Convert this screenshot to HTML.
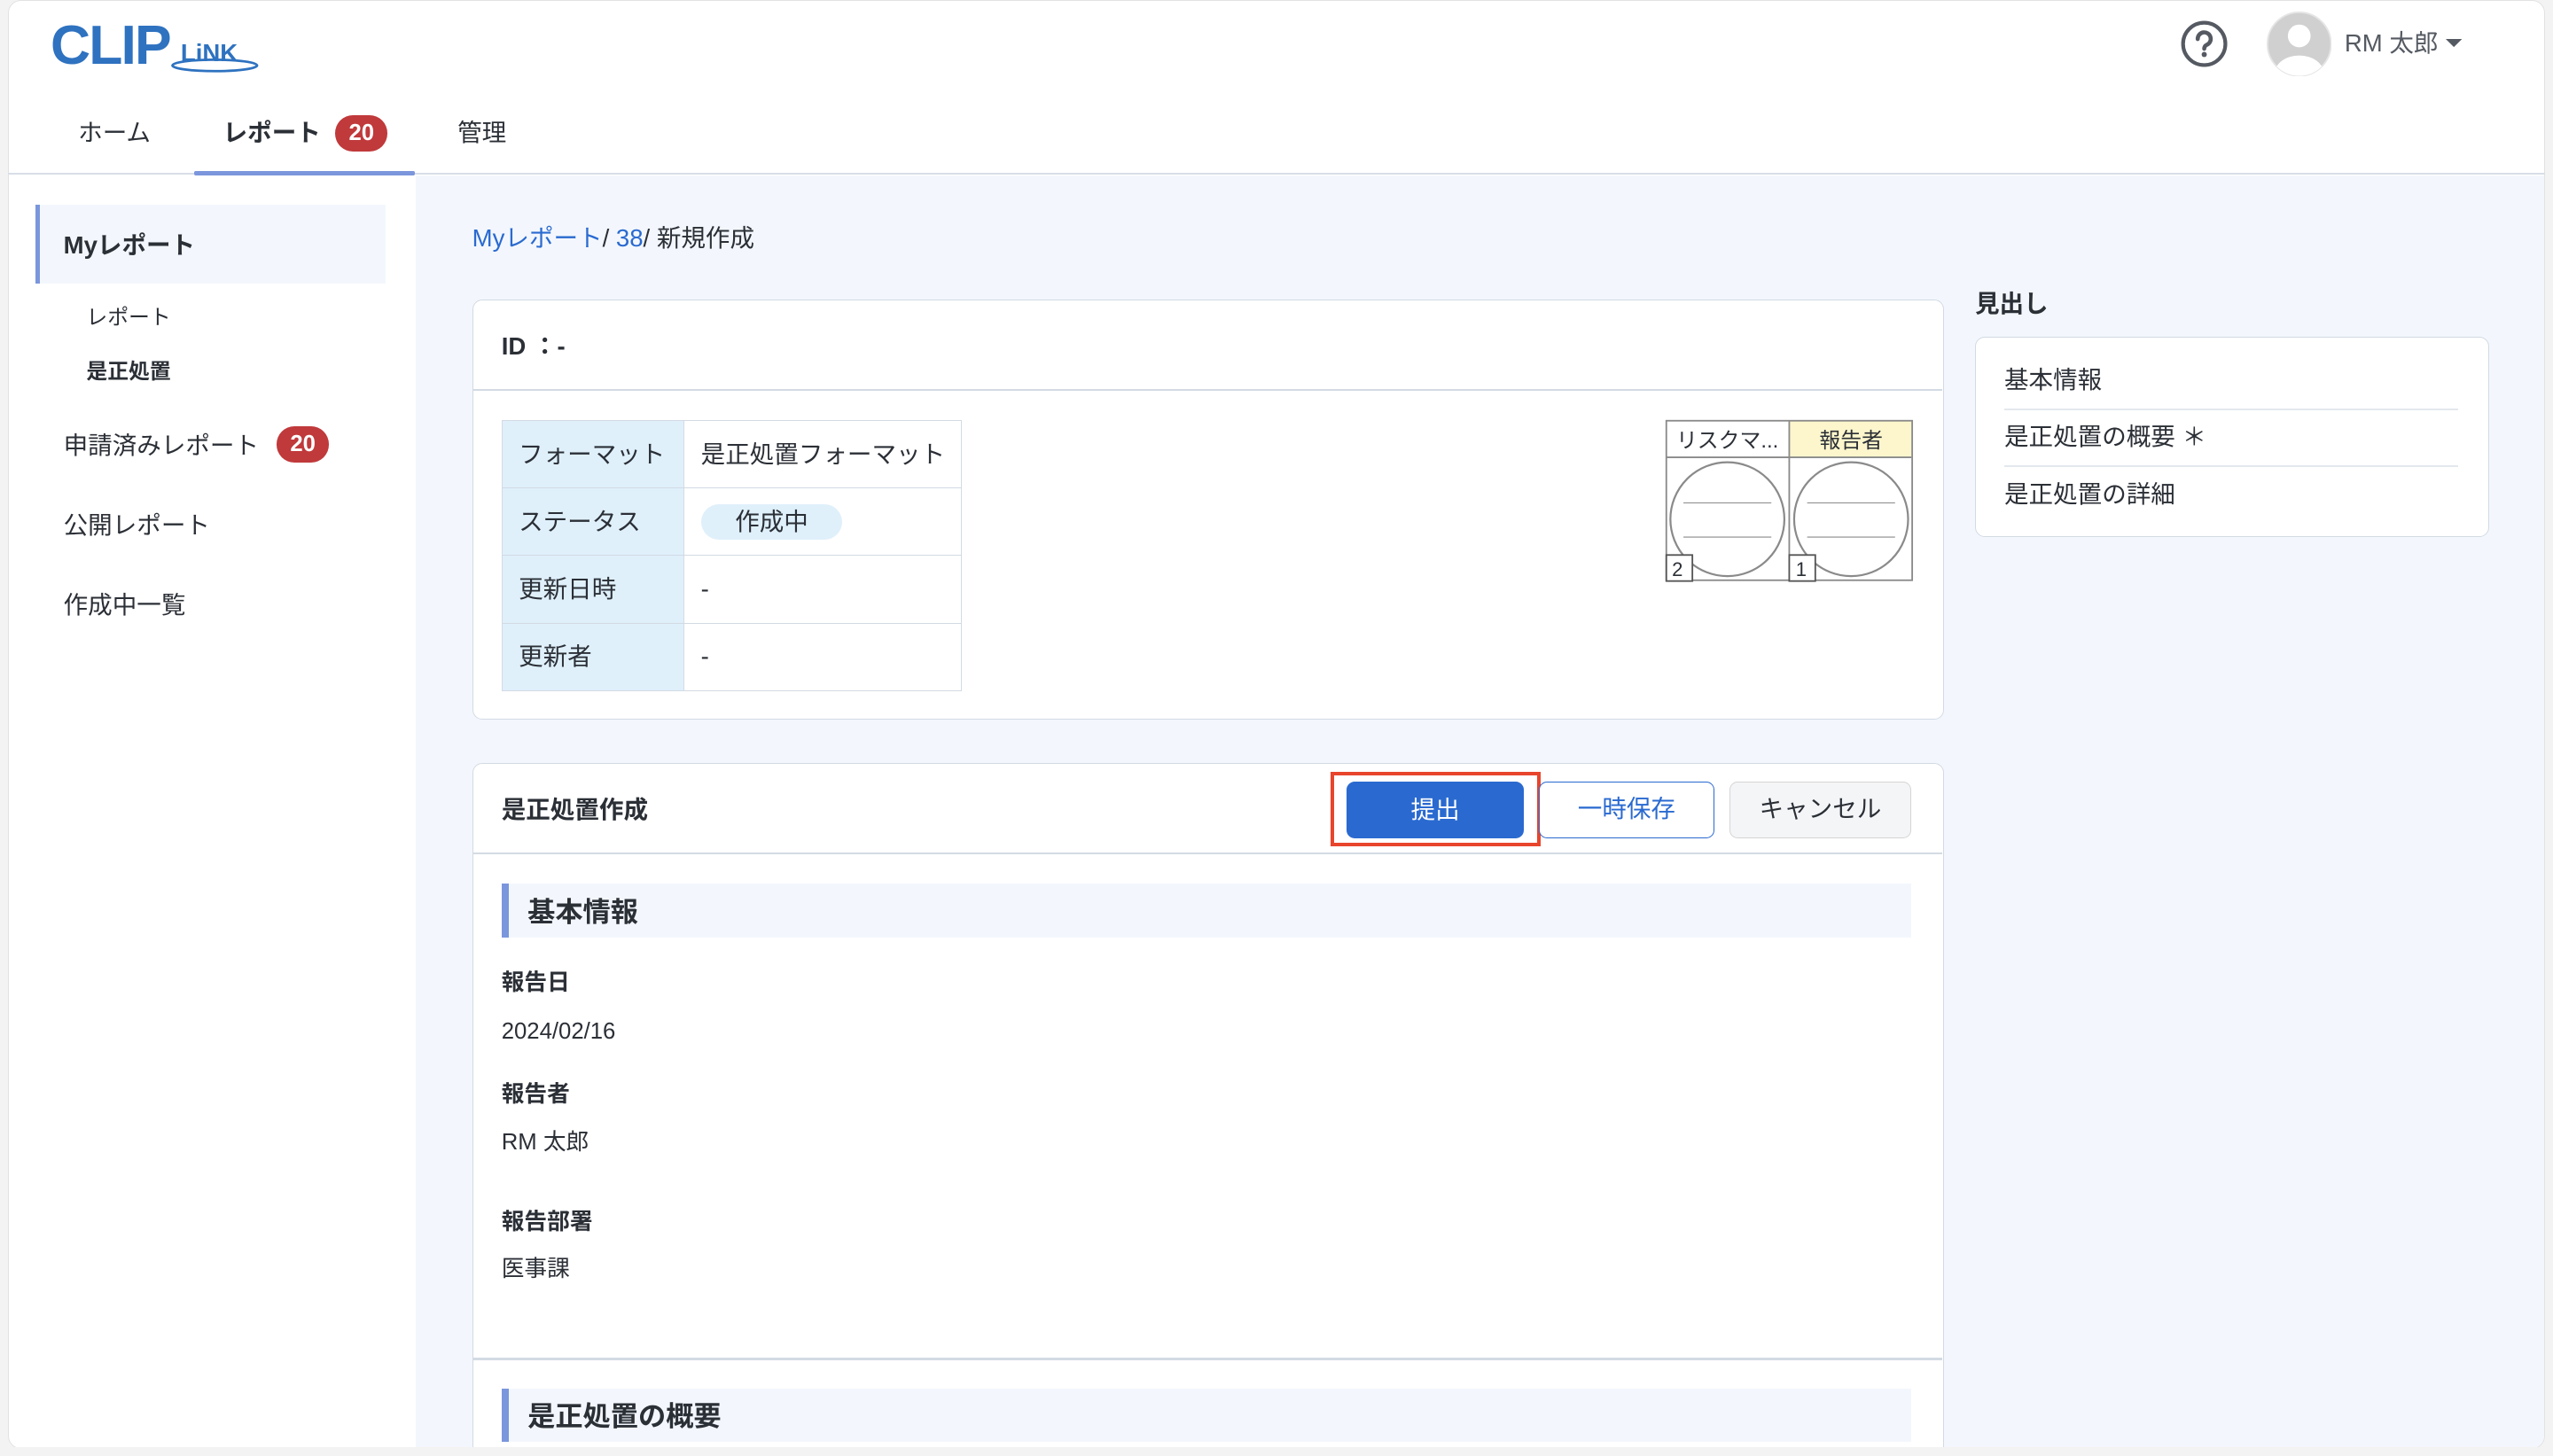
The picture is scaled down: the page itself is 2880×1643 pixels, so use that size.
<!DOCTYPE html>
<html><head><meta charset="utf-8">
<style>
*{box-sizing:border-box;margin:0;padding:0}
html,body{width:2880px;height:1643px;overflow:hidden;background:#f3f3f3}
body{font-family:"Liberation Sans","Noto Sans CJK JP",sans-serif;color:#2b2f36}
#w{zoom:1.83673;width:1568px;height:894.5px;position:relative}
.abs{position:absolute}
#app{left:5px;top:0;width:1558px;height:890px;background:#fff;border-radius:8px;border:1px solid #e2e2e2;overflow:hidden}
#content{left:250px;top:107px;width:1310px;height:790px;background:#f3f7fd}
.t{position:absolute;white-space:nowrap;line-height:1}
.badge{position:absolute;background:#c0393b;color:#fff;font-weight:bold;font-size:14px;border-radius:11px;text-align:center;line-height:22px;height:22px}
.card{position:absolute;background:#fff;border:1px solid #d3dae3;border-radius:6px}
.bl{color:#2a6ad0}
table{border-collapse:collapse;position:absolute}
td{border:1px solid #d3dae3;font-size:15px;height:41.5px;padding:0 10px;white-space:nowrap;line-height:1}
td.l{background:#dff0fb;width:112px}
</style></head><body><div id="w">
<div id="app" class="abs">
 <div id="content" class="abs"></div>
</div>
<!-- logo -->
<div class="t" style="left:31px;top:11px;font-size:34px;font-weight:bold;color:#2e72c0;letter-spacing:-1px">CLIP</div>
<svg class="abs" style="left:103px;top:33px" width="58" height="12"><ellipse cx="29" cy="7" rx="26" ry="3.5" fill="none" stroke="#2e72c0" stroke-width="1.5"/></svg>
<div class="t" style="left:111px;top:25px;font-size:15px;font-weight:bold;color:#2e72c0;background:transparent">LiNK</div>
<!-- nav -->
<div class="t" style="left:48px;top:74px;font-size:15px">ホーム</div>
<div class="t" style="left:137px;top:74px;font-size:15px;font-weight:bold">レポート</div>
<div class="badge" style="left:206px;top:71px;width:32px">20</div>
<div class="t" style="left:281px;top:74px;font-size:15px">管理</div>
<div class="abs" style="left:5px;top:106px;width:1558px;height:1.5px;background:#d8dee6"></div>
<div class="abs" style="left:119px;top:105px;width:136px;height:3px;background:#7b96dc;border-radius:1px"></div>
<!-- header right -->
<svg class="abs" style="left:1339px;top:12px" width="30" height="30"><circle cx="15" cy="15" r="13" fill="none" stroke="#555a62" stroke-width="2.3"/><path d="M11 12a4 4 0 1 1 5.5 3.6c-1 .5-1.5 1.1-1.5 2.4" fill="none" stroke="#555a62" stroke-width="2.5" stroke-linecap="round"/><circle cx="15" cy="21.5" r="1.6" fill="#555a62"/></svg>
<svg class="abs" style="left:1392px;top:7px" width="40" height="40"><defs><clipPath id="c"><circle cx="20" cy="20" r="19.5"/></clipPath></defs><circle cx="20" cy="20" r="19.5" fill="#d0d0d0" stroke="#e5e5e5"/><g clip-path="url(#c)"><circle cx="20" cy="15" r="7" fill="#fff"/><ellipse cx="20" cy="38" rx="15" ry="11" fill="#fff"/></g></svg>
<div class="t" style="left:1440px;top:19px;font-size:15px;color:#555a62">RM 太郎</div>
<svg class="abs" style="left:1502px;top:24px" width="10" height="6"><path d="M0 0h10L5 5z" fill="#555a62"/></svg>
<!-- sidebar -->
<div class="abs" style="left:22px;top:126px;width:215px;height:48px;background:#f3f7fd;border-left:3px solid #7b96dc"></div>
<div class="t" style="left:39px;top:143px;font-size:15px;font-weight:bold">Myレポート</div>
<div class="t" style="left:53px;top:189px;font-size:13px">レポート</div>
<div class="t" style="left:53px;top:222px;font-size:13px;font-weight:bold">是正処置</div>
<div class="t" style="left:39px;top:266px;font-size:15px">申請済みレポート</div>
<div class="badge" style="left:170px;top:262px;width:32px">20</div>
<div class="t" style="left:39px;top:315px;font-size:15px">公開レポート</div>
<div class="t" style="left:39px;top:364px;font-size:15px">作成中一覧</div>
<!-- breadcrumb -->
<div class="t" style="left:290px;top:139px;font-size:15px"><span class="bl">Myレポート</span>/ <span class="bl">38</span>/ 新規作成</div>
<!-- card1 -->
<div class="card" style="left:290px;top:184px;width:904px;height:258px"></div>
<div class="t" style="left:308px;top:205px;font-size:15px;font-weight:bold">ID ：-</div>
<div class="abs" style="left:291px;top:239px;width:902px;height:1px;background:#d3dae3"></div>
<table style="left:308px;top:258px;width:283px">
<tr><td class="l">フォーマット</td><td>是正処置フォーマット</td></tr>
<tr><td class="l">ステータス</td><td><span style="display:inline-block;background:#dff0fb;border-radius:12px;padding:0 21px;line-height:22px">作成中</span></td></tr>
<tr><td class="l">更新日時</td><td>-</td></tr>
<tr><td class="l">更新者</td><td>-</td></tr>
</table>
<svg class="abs" style="left:1022px;top:257px" width="154" height="102" font-family="Liberation Sans,Noto Sans CJK JP,sans-serif">
<rect x="77" y="1.5" width="75" height="23" fill="#fdf6cc"/>
<rect x="1.5" y="1.5" width="151" height="98" fill="none" stroke="#8a8a8a"/>
<line x1="77" y1="1.5" x2="77" y2="100" stroke="#8a8a8a"/>
<line x1="1.5" y1="24" x2="152" y2="24" stroke="#8a8a8a"/>
<text x="39" y="18" font-size="13" text-anchor="middle" fill="#2b2f36">リスクマ...</text>
<text x="115" y="18" font-size="13" text-anchor="middle" fill="#2b2f36">報告者</text>
<circle cx="39" cy="62" r="35" fill="none" stroke="#8a8a8a" stroke-width="1.2"/>
<circle cx="115" cy="62" r="35" fill="none" stroke="#8a8a8a" stroke-width="1.2"/>
<line x1="12" y1="52" x2="66" y2="52" stroke="#8a8a8a" stroke-width=".6"/><line x1="12" y1="73" x2="66" y2="73" stroke="#8a8a8a" stroke-width=".6"/>
<line x1="88" y1="52" x2="142" y2="52" stroke="#8a8a8a" stroke-width=".6"/><line x1="88" y1="73" x2="142" y2="73" stroke="#8a8a8a" stroke-width=".6"/>
<rect x="1.5" y="84" width="16" height="16" fill="#fff" stroke="#555" />
<rect x="77" y="84" width="16" height="16" fill="#fff" stroke="#555" />
<text x="5" y="97" font-size="12" fill="#2b2f36">2</text><text x="81" y="97" font-size="12" fill="#2b2f36">1</text>
</svg>
<!-- card2 -->
<div class="card" style="left:290px;top:469px;width:904px;height:440px"></div>
<div class="t" style="left:308px;top:490px;font-size:15px;font-weight:bold">是正処置作成</div>
<div class="abs" style="left:291px;top:524px;width:902px;height:1px;background:#d3dae3"></div>
<div class="abs" style="left:817px;top:474px;width:129px;height:46px;border:2.5px solid #e8452c"></div>
<div class="abs" style="left:827px;top:480px;width:109px;height:35px;background:#2a6ad0;border-radius:5px;color:#fff;font-size:15px;text-align:center;line-height:35px">提出</div>
<div class="abs" style="left:945px;top:480px;width:108px;height:35px;background:#fff;border:1px solid #2a6ad0;border-radius:5px;color:#2a6ad0;font-size:15px;text-align:center;line-height:33px">一時保存</div>
<div class="abs" style="left:1062px;top:480px;width:112px;height:35px;background:#f4f5f7;border:1px solid #d5d5d5;border-radius:5px;font-size:15px;text-align:center;line-height:33px">キャンセル</div>
<div class="abs" style="left:308px;top:543px;width:866px;height:33px;background:#f3f7fd;border-left:4.5px solid #7b96dc"></div>
<div class="t" style="left:324px;top:552px;font-size:17px;font-weight:bold">基本情報</div>
<div class="t" style="left:308px;top:597px;font-size:14px;font-weight:bold">報告日</div>
<div class="t" style="left:308px;top:627px;font-size:14px">2024/02/16</div>
<div class="t" style="left:308px;top:666px;font-size:14px;font-weight:bold">報告者</div>
<div class="t" style="left:308px;top:695px;font-size:14px">RM 太郎</div>
<div class="t" style="left:308px;top:744px;font-size:14px;font-weight:bold">報告部署</div>
<div class="t" style="left:308px;top:773px;font-size:14px">医事課</div>
<div class="abs" style="left:291px;top:834px;width:902px;height:1.5px;background:#d3dae3"></div>
<div class="abs" style="left:308px;top:853px;width:866px;height:33px;background:#f3f7fd;border-left:4.5px solid #7b96dc"></div>
<div class="t" style="left:324px;top:862px;font-size:17px;font-weight:bold">是正処置の概要</div>
<div class="abs" style="left:5px;top:889px;width:1563px;height:6px;background:#f3f3f3"></div>
<!-- right -->
<div class="t" style="left:1213px;top:179px;font-size:15px;font-weight:bold">見出し</div>
<div class="card" style="left:1213px;top:207px;width:316px;height:123px"></div>
<div class="t" style="left:1231px;top:226px;font-size:15px">基本情報</div>
<div class="abs" style="left:1231px;top:251px;width:279px;height:1px;background:#e3e8ee"></div>
<div class="t" style="left:1231px;top:261px;font-size:15px">是正処置の概要 ＊</div>
<div class="abs" style="left:1231px;top:286px;width:279px;height:1px;background:#e3e8ee"></div>
<div class="t" style="left:1231px;top:296px;font-size:15px">是正処置の詳細</div>
</div></body></html>
